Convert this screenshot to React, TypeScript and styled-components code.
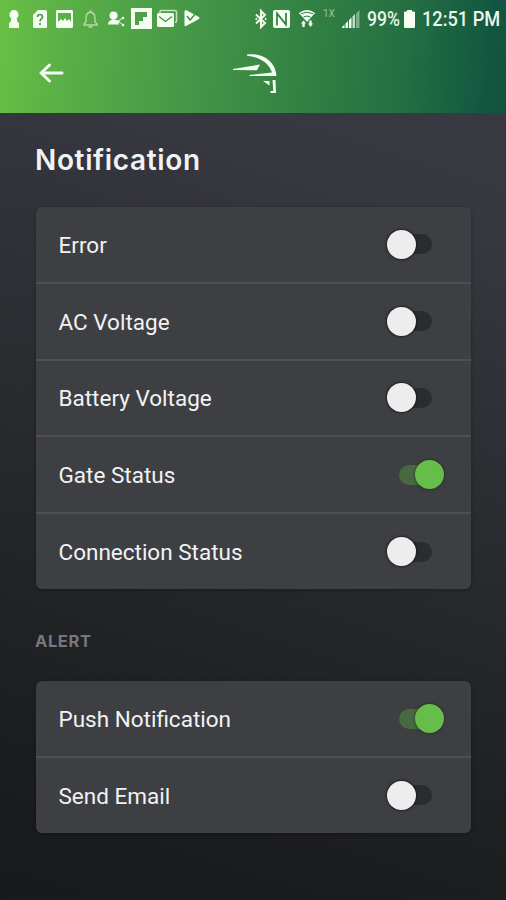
import React, { useState } from "react";
import styled, { createGlobalStyle } from "styled-components";

const GlobalStyle = createGlobalStyle`
  * { box-sizing: border-box; }
  body { margin: 0; background: #1b1c1e; }
`;

const Screen = styled.div`
  width: 506px;
  height: 900px;
  overflow: hidden;
  display: flex;
  flex-direction: column;
  font-family: Roboto, sans-serif;
  color: #f1f2f3;
  background: linear-gradient(198deg, #3a3a42 0%, #383841 20%, #313238 35%, #2a2b2f 52%, #222326 70%, #1b1c1e 88%, #18191b 100%);
`;

const Header = styled.header`
  flex: none;
  height: 113px;
  background: linear-gradient(95deg, #69c045 0%, #5bb146 12%, #459647 38%, #327f43 62%, #246e42 80%, #125641 96%, #115340 100%);
`;

const StatusBar = styled.div`
  height: 37px;
  display: flex;
  align-items: center;
`;

const Glyph = styled.svg<{ $before: number }>`
  flex: none;
  display: block;
  margin-left: ${(p) => p.$before}px;
  fill: #f4fff1;
  overflow: visible;
`;

const StatusText = styled.div<{ $before: number; $width: number; $stretch: number }>`
  flex: none;
  width: ${(p) => p.$width}px;
  margin-left: ${(p) => p.$before}px;
  font-size: 20px;
  line-height: 24px;
  font-weight: 500;
  white-space: nowrap;
  color: #e9f7ec;
  transform: scaleX(${(p) => p.$stretch});
  transform-origin: left center;
`;

const NetworkLabel = styled.div`
  flex: none;
  width: 13px;
  height: 18px;
  margin-left: 8px;
  font-size: 10px;
  line-height: 8px;
  color: #9cc4a0;
`;

const NavBar = styled.div`
  height: 76px;
  display: flex;
  align-items: flex-start;
`;

const BackButton = styled.button`
  width: 26px;
  height: 22px;
  margin: 25px 0 0 38px;
  padding: 0;
  border: 0;
  background: none;
`;

const Logo = styled.svg`
  display: block;
  margin: 15px 0 0 168px;
  fill: #f4fff1;
`;

const Content = styled.main`
  padding: 0 35px 0 36px;
  display: flex;
  flex-direction: column;
`;

const Title = styled.h1`
  margin: 29px 0 0 -1px;
  height: 36px;
  font: 600 28px/36px Inter, sans-serif;
  letter-spacing: 0.65px;
  white-space: nowrap;
`;

const SectionLabel = styled.h2`
  margin: 42px 0 0 -1px;
  height: 20px;
  font: 700 16.5px/20px Inter, sans-serif;
  letter-spacing: 0.6px;
  color: #77787b;
`;

const Card = styled.section<{ $top: number }>`
  margin-top: ${(p) => p.$top}px;
  border-radius: 6px;
  background: #3e3f43;
  box-shadow: 0 1px 4px rgba(0, 0, 0, 0.3);
`;

const Row = styled.div`
  height: 76.8px;
  padding: 0 27px 0 22.5px;
  display: flex;
  align-items: center;
  justify-content: space-between;
  border-bottom: 2px solid #4e5053;
  &:last-child {
    height: 75px;
    border-bottom: 0;
  }
`;

const RowLabel = styled.span`
  font-size: 22.5px;
  line-height: 30px;
  padding-top: 1px;
  white-space: nowrap;
`;

const Switch = styled.button<{ $on: boolean }>`
  width: 57px;
  height: 30px;
  padding: 0;
  border: 0;
  background: none;
  display: flex;
  align-items: center;
  justify-content: ${(p) => (p.$on ? "flex-end" : "flex-start")};
`;

const Track = styled.span<{ $on: boolean }>`
  width: 34px;
  height: 20px;
  border-radius: 10px;
  margin: ${(p) => (p.$on ? "0 -18px 0 0" : "0 0 0 -18px")};
  order: ${(p) => (p.$on ? 0 : 1)};
  background: ${(p) => (p.$on ? "#46693f" : "#2a2c2e")};
`;

const Thumb = styled.span<{ $on: boolean }>`
  flex: none;
  z-index: 1;
  width: 29px;
  height: 29px;
  border-radius: 50%;
  order: ${(p) => (p.$on ? 1 : 0)};
  background: ${(p) => (p.$on ? "#66bd49" : "#ededed")};
  box-shadow: 0 0 2px 1px rgba(20, 20, 24, ${(p) => (p.$on ? 0.35 : 0.7)});
`;

function SettingRow({ label, initial = false }: { label: string; initial?: boolean }) {
  const [on, setOn] = useState(initial);
  return (
    <Row>
      <RowLabel>{label}</RowLabel>
      <Switch $on={on} role="switch" aria-checked={on} aria-label={label} onClick={() => setOn(!on)}>
        <Track $on={on} />
        <Thumb $on={on} />
      </Switch>
    </Row>
  );
}

function Status() {
  return (
    <StatusBar>
      <Glyph $before={8} width="12" height="18" viewBox="0 0 12 18">
        <path d="M6 0a4.500 4.500 0 0 1 4.500 4.800c0 1.700-1 2.800-1.800 3.700L9.500 12l1.500 1v5H1v-5l1.500-1 .8-3.500C2.500 7.600 1.500 6.500 1.500 4.800A4.500 4.500 0 0 1 6 0Z" />
      </Glyph>
      <Glyph $before={13} width="14" height="18" viewBox="0 0 14 18">
        <path d="M5 0h7.500Q14 0 14 1.500v15q0 1.500-1.500 1.500h-11Q0 18 0 16.500V5Z" />
        <path d="M4.500 7Q4.500 4.500 7 4.500T9.500 7C9.500 9 7 9 7 11.500M7 13v2" fill="none" stroke="#4b9d43" strokeWidth="1.700" />
      </Glyph>
      <Glyph $before={9} width="17" height="18" viewBox="0 0 17 18">
        <path fillRule="evenodd" d="M1 0h15l1 1v16l-1 1H1l-1-1V1ZM2 3v9l3-3 2 2 2-3 2 3 2-2 2 3V3Z" />
      </Glyph>
      <Glyph $before={10} width="15" height="18" viewBox="0 0 15 18">
        <path d="M1 15v-1l2-2V8q0-5 4.500-6Q12 3 12 8v4l2 2v1ZM7.500 2V0M5.500 17h4" fill="none" stroke="#b5dda9" strokeWidth="1.300" />
      </Glyph>
      <Glyph $before={10} width="17" height="16" viewBox="0 0 17 16">
        <circle cx="5.500" cy="4.500" r="4" />
        <path d="M0 13.500q0-3.500 4-5h3q3 1 4 5Z" />
        <path d="m15 7-5 3 5 4" fill="none" stroke="#f4fff1" strokeWidth="1" />
        <circle cx="15" cy="7" r="1.300" /><circle cx="9.800" cy="10.500" r="1.500" /><circle cx="15" cy="14" r="1.300" />
      </Glyph>
      <Glyph $before={6} width="21" height="21" viewBox="0 0 21 21">
        <path fillRule="evenodd" d="M0 0h21v21H0ZM4 4v13h4v-4h4V9h4V4Z" />
      </Glyph>
      <Glyph $before={5} width="20" height="18" viewBox="0 0 20 18">
        <path d="M3 3V1.500Q3 .5 4 .5h14q1.500 0 1.500 1.500v9q0 1.500-1.500 1.500" fill="none" stroke="#c2e2bf" strokeWidth="1.500" />
        <rect y="3" width="17" height="14" rx="1.500" />
        <path d="m2 6.500 6.500 5L15 6.500" fill="none" stroke="#438f46" strokeWidth="1.300" />
      </Glyph>
      <Glyph $before={7} width="16" height="17" viewBox="0 0 16 17">
        <path d="M2 0 15 7q1 1 0 2L2 16q-1.500.5-1.500-1V1.500Q.5 0 2 0Z" />
        <path d="m3 6 3 4 7-8" fill="none" stroke="#438f46" strokeWidth="1.500" />
      </Glyph>
      <Glyph $before={55} width="12" height="18" viewBox="0 0 12 18">
        <path d="m1 4.500 9 8.500-4 4V1l4 4-9 8.500" fill="none" stroke="#f4fff1" strokeWidth="2" />
        <path d="m0 9 1.300-1.300L2.600 9 1.300 10.300ZM9.400 9l1.300-1.300L12 9l-1.300 1.300Z" />
      </Glyph>
      <Glyph $before={6} width="17" height="18" viewBox="0 0 17 18">
        <rect width="17" height="18" rx="2" />
        <path d="M4 15.500V3.500l9 11V3" fill="none" stroke="#2e7a42" strokeWidth="1.700" />
      </Glyph>
      <Glyph $before={9} width="16" height="17" viewBox="0 0 16 17">
        <path d="M0 3q8-6 16 0L8 12Z" />
        <path d="M2 3.700q6-3 12 0M4.500 7q3.500-2 7 0" fill="none" stroke="#2e7a42" strokeWidth="1" />
        <path d="m2 13.500 2.500-3L7 13.500H5.700V17H3.300v-3.500ZM9 13.500h1.300v-3h2.400v3H14L11.500 17Z" />
      </Glyph>
      <NetworkLabel>1X</NetworkLabel>
      <Glyph $before={6} width="18" height="18" viewBox="0 0 18 18">
        <path d="M0 18v-1l2.500-2.500V18ZM3.500 18v-4.500L6 11v7ZM7 18v-8l2.500-2.500V18Z" />
        <path d="M10.500 18V6.500L13 4v14Z" opacity=".75" />
        <path d="M14 18V3.500L17.500 0v18Z" opacity=".4" />
      </Glyph>
      <StatusText $before={7} $width={34} $stretch={0.88}>99%</StatusText>
      <Glyph $before={3} width="11" height="18" viewBox="0 0 11 18">
        <path d="M3 0h5v1.500h2q1 0 1 1V17q0 1-1 1H1q-1 0-1-1V2.500q0-1 1-1h2Z" />
      </Glyph>
      <StatusText $before={7} $width={79} $stretch={0.91}>12:51 PM</StatusText>
    </StatusBar>
  );
}

export default function App() {
  return (
    <>
      <GlobalStyle />
      <Screen>
        <Header>
          <Status />
          <NavBar>
            <BackButton aria-label="Back">
              <svg width="26" height="22" viewBox="0 0 26 22" fill="none" stroke="#f6fff3" strokeWidth="2.900" strokeLinecap="round">
                <path d="M24 11H3.500M11.500 3 3.200 11l8.300 8" />
              </svg>
            </BackButton>
            <Logo width="48" height="42" viewBox="0 0 48 42">
              <path d="M15 2.500C30 .5 43.500 9 44.500 24L18 24l-1-1L40 20.500C37 11 28 5 15 3.700Z" />
              <path d="M1 17 28 12.500 25 18.200 1 18Z" />
              <path d="M31 29H37.500V33.500ZM40.500 28H43.500L44 41H38.500V39H41.300Z" />
            </Logo>
          </NavBar>
        </Header>
        <Content>
          <Title>Notification</Title>
          <Card $top={29}>
            <SettingRow label="Error" />
            <SettingRow label="AC Voltage" />
            <SettingRow label="Battery Voltage" />
            <SettingRow label="Gate Status" initial />
            <SettingRow label="Connection Status" />
          </Card>
          <SectionLabel>ALERT</SectionLabel>
          <Card $top={30}>
            <SettingRow label="Push Notification" initial />
            <SettingRow label="Send Email" />
          </Card>
        </Content>
      </Screen>
    </>
  );
}
